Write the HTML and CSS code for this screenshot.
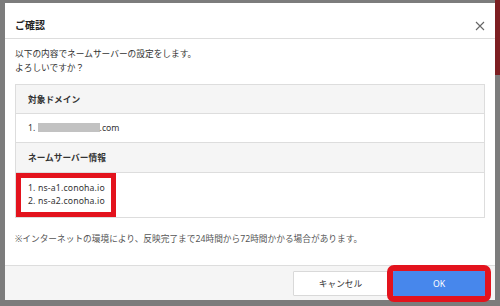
FILE: index.html
```html
<!DOCTYPE html>
<html lang="ja">
<head>
  <meta charset="UTF-8" />
  <title>ご確認</title>
  <link rel="stylesheet" href="styles.css">
</head>
<body>
  <div class="modal">
    <div class="modal-header">
      <h2>ご確認</h2>
      <span class="close">
        <svg width="10" height="10" viewBox="0 0 10 10"><path d="M1 1L9 9M9 1L1 9" stroke="#666" stroke-width="1.1" fill="none"/></svg>
      </span>
    </div>

    <div class="modal-body">
      <p class="lead">以下の内容でネームサーバーの設定をします。<br>よろしいですか？</p>

      <table class="info">
        <tr class="head"><th>対象ドメイン</th></tr>
        <tr class="row"><td>1. <span class="masked"></span>.com</td></tr>
        <tr class="head"><th>ネームサーバー情報</th></tr>
        <tr class="row ns">
          <td>
            <div class="mark">
              1. ns-a1.conoha.io<br>
              2. ns-a2.conoha.io
            </div>
          </td>
        </tr>
      </table>

      <p class="note">※インターネットの環境により、反映完了まで24時間から72時間かかる場合があります。</p>
    </div>

    <div class="modal-footer">
      <button class="btn cancel">キャンセル</button>
      <button class="btn ok">OK</button>
    </div>
  </div>
</body>
</html>
```

FILE: styles.css
```css
* {
  margin: 0; padding: 0;
  box-sizing: border-box;
  font-family: 'Noto Sans', 'Noto Sans CJK JP', sans-serif;
}
body {
  height: 306px;
  overflow: hidden;
  background: linear-gradient(#7d1f22, #7d1f22) right top / 5px 75px no-repeat, #7c7c7c;
  color: #333;
}

.modal {
  width: 490px;
  height: 297px;
  margin: 3px 0 0 5px;
  background: #fff;
  display: flex;
  flex-direction: column;
}

.modal-header {
  height: 36px;
  padding: 0 10px;
  border-bottom: 1px solid #ddd;
  display: flex;
  justify-content: space-between;
  align-items: flex-start;
}
.modal-header h2 {
  font-size: 10px;
  font-weight: bold;
  line-height: 14px;
  margin-top: 15px;
  color: #222;
}
.close {
  margin-top: 11px;
  display: block;
  height: 10px;
}

.modal-body {
  flex: 1;
  padding: 8px 10px 0;
}
.lead {
  font-size: 8.7px;
  line-height: 14px;
}

.info {
  width: 100%;
  margin-top: 9px;
  border-collapse: collapse;
  border: 1px solid #ddd;
  font-size: 8.7px;
}
.info th, .info td {
  text-align: left;
  padding: 0 12px;
  border-top: 1px solid #ddd;
  height: 29px;
}
.info th {
  background-color: #f5f5f5;
  font-weight: 600;
}
.info tr.head:nth-child(3) th {
  height: 30px;
}

.masked {
  display: inline-block;
  width: 62px;
  height: 9px;
  background-color: #c2c2c2;
  vertical-align: -1px;
}

.info .ns td {
  padding: 0;
  height: 45px;
  vertical-align: top;
}
.mark {
  display: inline-block;
  height: 44px;
  border: 5px solid #e3131d;
  padding: 4px 6px 0 7px;
  line-height: 13px;
  letter-spacing: 0.15px;
}

.note {
  margin-top: 14px;
  font-size: 8.7px;
  line-height: 14px;
  color: #555;
}

.modal-footer {
  height: 35px;
  background-color: #f5f5f5;
  border-top: 1px solid #ddd;
  padding: 5px 10px 0;
  display: flex;
  justify-content: flex-end;
  align-items: flex-start;
  gap: 5px;
}
.btn {
  height: 25px;
  font-size: 8.7px;
  border-radius: 1px;
  cursor: pointer;
}
.cancel {
  width: 95px;
  background-color: #fff;
  border: 1px solid #d9d9d9;
  color: #333;
}
.ok {
  width: 92px;
  background-color: #4787ec;
  border: none;
  color: #fff;
  outline: 6px solid #e3131d;
}
```
